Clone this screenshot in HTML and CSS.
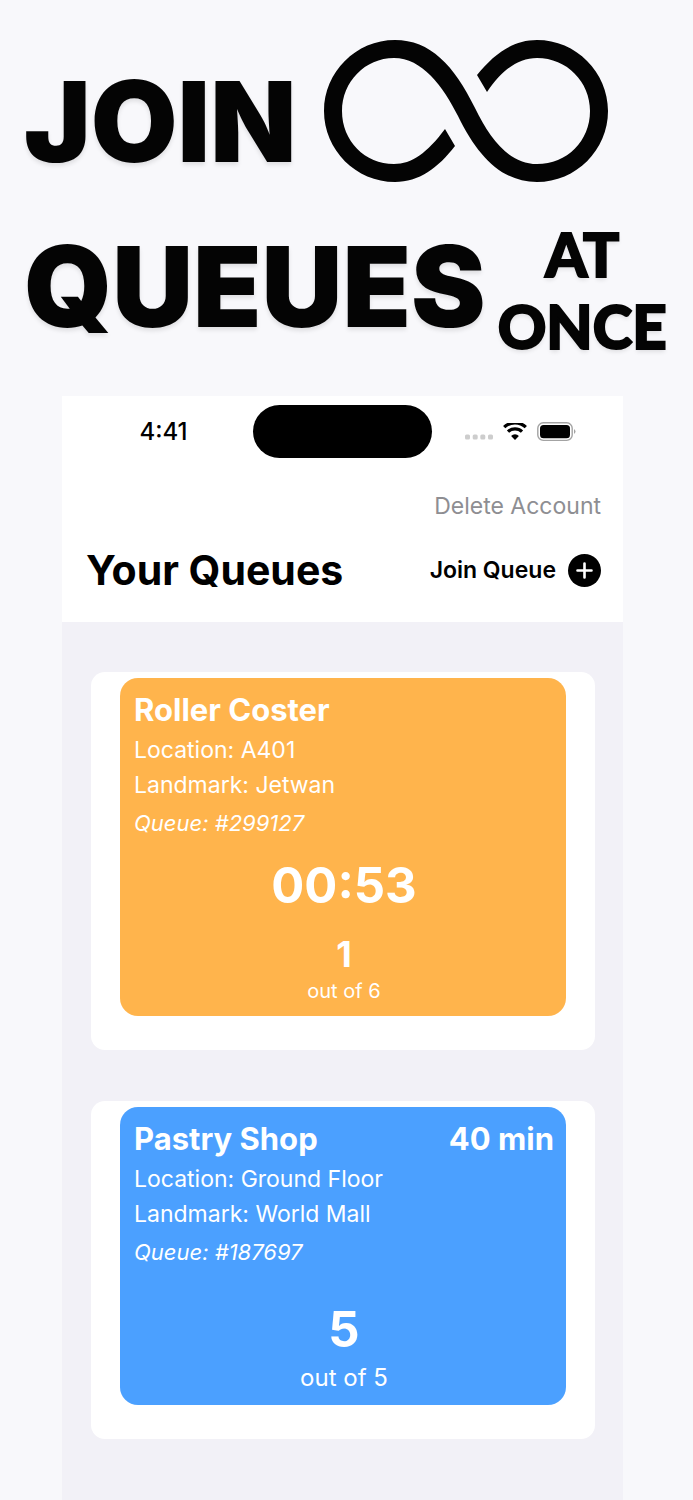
FILE: index.html
```
<!DOCTYPE html>
<html lang="en">
<head>
<meta charset="utf-8">
<meta name="viewport" content="width=device-width, initial-scale=1">
<title>Your Queues</title>
<link rel="stylesheet" href="styles.css">
</head>
<body>
<h1 class="hero">
  <span class="hero-row">
    <span class="hero-join">JOIN</span>
    <svg class="infinity" viewBox="0 0 284 142" role="img" aria-label="infinite">
      <path d="M121 89C103 113 88 124 70 124C41 124 18 101 18 71C18 42 41 18 70 18C98 18 119 46 134 76C154 117 178 142 213 142C252 142 284 110 284 71C284 32 252 0 213 0C189 0 170 14 153 35L163 52C178 30 194 18 213 18C243 18 266 42 266 71C266 101 243 124 213 124C185 124 166 99 151 68C130 25 106 0 71 0C32 0 0 32 0 71C0 110 32 142 71 142C95 142 114 128 131 106Z"/>
    </svg>
  </span>
  <span class="hero-row hero-row-second">
    <span class="hero-queues">QUEUES</span>
    <span class="hero-aside"><span>AT</span><span>ONCE</span></span>
  </span>
</h1>
<div class="phone">
  <div class="status">
    <span class="clock">4:41</span>
    <span class="island"></span>
    <span class="indicators">
      <svg width="28" height="18" viewBox="0 0 28 18" fill="#cdcdcd" aria-hidden="true"><rect x="0" y="11.500" width="5" height="5" rx="1.500"/><rect x="7.700" y="11.500" width="5" height="5" rx="1.500"/><rect x="15.300" y="11.500" width="5" height="5" rx="1.500"/><rect x="23" y="11.500" width="5" height="5" rx="1.500"/></svg>
      <svg width="24" height="18" viewBox="0 0 24 18" aria-hidden="true"><path d="M1.200 5.200A15.500 15.500 0 0 1 22.800 5.200M5 9.700A10 10 0 0 1 19 9.700" transform="translate(0 -1)" fill="none" stroke="#000" stroke-width="3.200"/><path d="M8.100 13a5.400 5.400 0 0 1 7.800 0L12 17z"/></svg>
      <svg width="39" height="20" viewBox="0 0 39 20" aria-hidden="true"><rect x=".8" y=".8" width="34.400" height="17.600" rx="5.500" fill="none" stroke="#a3a3a3" stroke-width="1.400"/><rect x="3" y="3" width="30" height="13.200" rx="3.500"/><path d="M37 7q3 2.500 0 5z" fill="#a3a3a3"/></svg>
    </span>
  </div>
  <header class="app-header">
    <button class="delete" type="button">Delete Account</button>
    <div class="title-row">
      <h2 class="title">Your Queues</h2>
      <button class="join" type="button">Join Queue
        <svg width="33" height="33" viewBox="0 0 33 33" aria-hidden="true"><circle cx="16.500" cy="16.500" r="16.500"/><path d="M16.500 9.500v14M9.500 16.500h14" stroke="#fff" stroke-width="2.600" stroke-linecap="round"/></svg>
      </button>
    </div>
  </header>
  <main class="list">
    <article class="card">
      <div class="ticket ticket-orange">
        <div class="ticket-head"><h3>Roller Coster</h3></div>
        <p class="detail">Location: A401</p>
        <p class="detail">Landmark: Jetwan</p>
        <p class="number">Queue: #299127</p>
        <p class="timer">00:53</p>
        <p class="place">1</p>
        <p class="total">out of 6</p>
      </div>
    </article>
    <article class="card">
      <div class="ticket ticket-blue">
        <div class="ticket-head"><h3>Pastry Shop</h3><span>40 min</span></div>
        <p class="detail">Location: Ground Floor</p>
        <p class="detail">Landmark: World Mall</p>
        <p class="number">Queue: #187697</p>
        <p class="place place-large">5</p>
        <p class="total total-large">out of 5</p>
      </div>
    </article>
  </main>
</div>
</body>
</html>
```

FILE: styles.css
```
* { box-sizing: border-box; }
body {
  margin: 0;
  min-height: 100vh;
  display: flex;
  flex-direction: column;
  background: #f8f8fb;
  color: #000;
  font-family: Inter, "Liberation Sans", sans-serif;
}
h1, h2, h3, p { margin: 0; }
button {
  padding: 0;
  border: 0;
  background: none;
  color: inherit;
  font: inherit;
  cursor: pointer;
}
.hero {
  display: flex;
  flex-direction: column;
  gap: 36px;
  padding: 40px 24px 34px;
  color: #040404;
  font-size: 112px;
  font-weight: 900;
  line-height: 1;
  text-shadow: 0 3px 4px rgba(0, 0, 0, .1);
}
.hero-row { display: flex; align-items: flex-end; gap: 28px; }
.hero-row-second { gap: 12px; }
.hero-join { padding-bottom: 5px; }
.infinity { width: 284px; height: 142px; fill: #040404; }
.hero-queues { padding-bottom: 20px; }
.hero-aside {
  display: flex;
  flex-direction: column;
  font-family: Lato, sans-serif;
  font-size: 60px;
  line-height: 72px;
  text-align: center;
  -webkit-text-stroke: 2px #040404;
}
.phone {
  flex: 1;
  display: flex;
  flex-direction: column;
  margin: 0 70px 0 62px;
  background: #fff;
}
.status {
  display: grid;
  grid-template-columns: 1fr 179px 1fr;
  align-items: center;
  padding-top: 9px;
}
.clock { padding-left: 12px; font-size: 24px; font-weight: 500; text-align: center; }
.island { height: 53px; border-radius: 27px; background: #000; }
.indicators {
  display: flex;
  justify-content: center;
  align-items: center;
  gap: 10px;
  padding-right: 14px;
}
.app-header { padding: 30px 22px 28px 24px; }
.delete {
  display: block;
  margin-left: auto;
  color: #8e8e92;
  font-size: 23px;
  line-height: 36px;
}
.title-row {
  display: flex;
  justify-content: space-between;
  align-items: center;
  margin-top: 22px;
}
.title { font-size: 41px; font-weight: 700; line-height: 48px; }
.join {
  display: flex;
  align-items: center;
  gap: 12px;
  font-size: 23px;
  font-weight: 600;
}
.list {
  flex: 1;
  display: flex;
  flex-direction: column;
  gap: 51px;
  padding: 50px 28px 50px 29px;
  background: #f2f1f7;
}
.card { padding: 6px 29px 34px; border-radius: 14px; background: #fff; }
.ticket { padding: 12px 12px 10px 14px; border-radius: 18px; color: #fff; }
.ticket-orange { background: #ffb44c; }
.ticket-blue { background: #4ba0ff; }
.ticket-head {
  display: flex;
  justify-content: space-between;
  margin-bottom: 3px;
  font-size: 31px;
  font-weight: 700;
  line-height: 40px;
}
.ticket-head h3 { font: inherit; }
.detail { font-size: 23px; font-weight: 400; line-height: 35px; }
.number { margin-top: 3px; font-size: 22px; font-style: italic; font-weight: 400; line-height: 35px; }
.timer, .place, .total { text-align: center; }
.timer { margin-top: 15px; font-size: 49px; font-weight: 700; line-height: 60px; }
.place { margin-top: 16px; font-size: 36px; font-weight: 700; line-height: 44px; }
.total { font-size: 20px; font-weight: 400; line-height: 30px; }
.place-large { margin-top: 30px; font-size: 49px; line-height: 60px; }
.total-large { font-size: 24px; line-height: 35px; }
```
